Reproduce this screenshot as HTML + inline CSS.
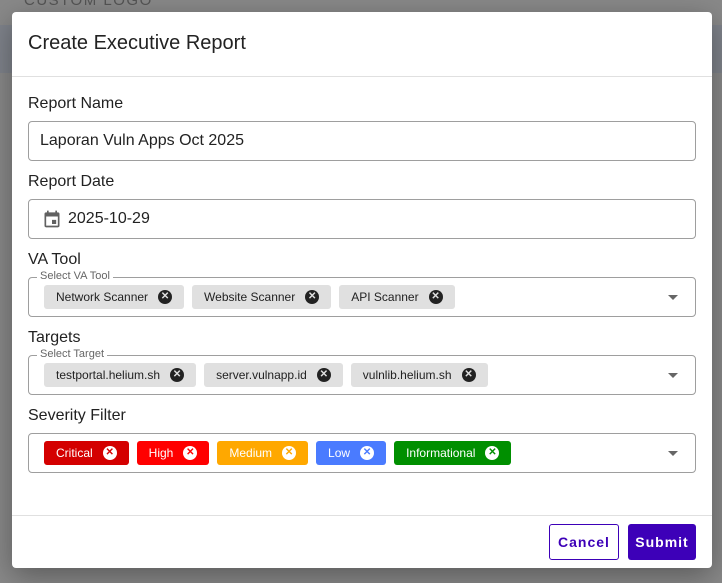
<!DOCTYPE html>
<html><head><style>
*{box-sizing:border-box}
body{margin:0;width:722px;height:583px;background:#898989;font-family:"Liberation Sans",sans-serif;position:relative;overflow:hidden}
.band{position:absolute;left:0;top:25px;width:722px;height:48px;background:#7f838b}
.bgtxt{position:absolute;left:24px;top:-8px;color:#555;font-size:15px;letter-spacing:1.5px}
.dlg{position:absolute;left:12px;top:12px;width:700px;height:556px;background:#fff;border-radius:4px;box-shadow:0 8px 30px rgba(0,0,0,.35)}
.title{position:absolute;left:16px;top:20px;font-size:20px;color:#222}
.hr{position:absolute;left:0;width:700px;height:1px;background:#e0e0e0}
.lbl{position:absolute;left:16px;font-size:16px;color:#222}
.box{position:absolute;left:16px;width:668px;height:40px;border:1px solid #9e9e9e;border-radius:4px}
.val{position:absolute;top:10px;font-size:16px;color:#222}
.leg{position:absolute;left:8px;top:-8px;background:#fff;padding:0 3px;font-size:11px;color:#666}
.chips{position:absolute;left:15px;top:7px;display:flex;gap:8px}
.chip{height:24px;border-radius:3px;background:#e0e0e0;font-size:12px;color:#222;display:flex;align-items:center;padding:0 12px 0 12px;gap:10px}
.x{width:14px;height:14px;border-radius:50%;background:#222;color:#e0e0e0;font-size:10px;line-height:14px;text-align:center;font-weight:bold}
.s .chip{color:#fff}
.s .x{background:#fff}
.arr{position:absolute;right:17px;top:17px;width:0;height:0;border-left:5px solid transparent;border-right:5px solid transparent;border-top:5px solid #666}
.btn{position:absolute;top:512px;height:36px;border-radius:3px;font-size:14px;font-weight:bold;letter-spacing:1px;display:flex;align-items:center;justify-content:center}
</style></head><body>
<div class="bgtxt">CUSTOM LOGO</div>
<div class="band"></div>
<div class="dlg">
<div class="title">Create Executive Report</div>
<div class="hr" style="top:64px"></div>
<div class="lbl" style="top:83px">Report Name</div>
<div class="box" style="top:109px"><div class="val" style="left:11px">Laporan Vuln Apps Oct 2025</div></div>
<div class="lbl" style="top:161px">Report Date</div>
<div class="box" style="top:187px">
<svg style="position:absolute;left:13px;top:9px" width="20" height="20" viewBox="0 0 24 24"><path fill="#616161" d="M19 4h-1V2h-2v2H8V2H6v2H5a2 2 0 0 0-2 2v14a2 2 0 0 0 2 2h14a2 2 0 0 0 2-2V6a2 2 0 0 0-2-2zm0 16H5V9h14v11zM12 13h5v5h-5z"/></svg>
<div class="val" style="left:39px">2025-10-29</div></div>
<div class="lbl" style="top:239px">VA Tool</div>
<div class="box" style="top:265px"><div class="leg">Select VA Tool</div>
<div class="chips"><div class="chip">Network Scanner<span class="x">✕</span></div><div class="chip">Website Scanner<span class="x">✕</span></div><div class="chip">API Scanner<span class="x">✕</span></div></div><div class="arr"></div></div>
<div class="lbl" style="top:317px">Targets</div>
<div class="box" style="top:343px"><div class="leg">Select Target</div>
<div class="chips"><div class="chip">testportal.helium.sh<span class="x">✕</span></div><div class="chip">server.vulnapp.id<span class="x">✕</span></div><div class="chip">vulnlib.helium.sh<span class="x">✕</span></div></div><div class="arr"></div></div>
<div class="lbl" style="top:395px">Severity Filter</div>
<div class="box s" style="top:421px">
<div class="chips"><div class="chip" style="background:#d40000">Critical<span class="x" style="color:#d40000">✕</span></div><div class="chip" style="background:#ff0000">High<span class="x" style="color:#f00">✕</span></div><div class="chip" style="background:#ffa800">Medium<span class="x" style="color:#ffa800">✕</span></div><div class="chip" style="background:#4a7bff">Low<span class="x" style="color:#4a7bff">✕</span></div><div class="chip" style="background:#008f00">Informational<span class="x" style="color:#008f00">✕</span></div></div><div class="arr"></div></div>
<div class="hr" style="top:503px"></div>
<div class="btn" style="left:537px;width:70px;border:1px solid #3d00b8;color:#3d00b8">Cancel</div>
<div class="btn" style="left:616px;width:68px;background:#3d00b8;color:#fff">Submit</div>
</div>
</body></html>
